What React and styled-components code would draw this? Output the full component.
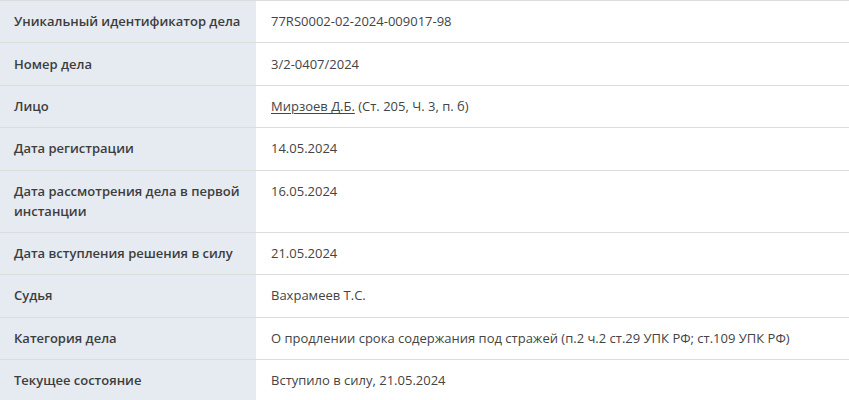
import React from 'react';
import styled, { createGlobalStyle } from 'styled-components';

const GlobalStyle = createGlobalStyle`
  html, body {
    margin: 0;
    padding: 0;
    background: #fff;
  }
  body {
    font-family: "Open Sans", "Liberation Sans", sans-serif;
  }
`;

const Table = styled.div`
  width: 849px;
  display: flex;
  flex-direction: column;
`;

const Row = styled.div`
  display: grid;
  grid-template-columns: 256px 1fr;
  border-top: 1px solid #dcdcdc;
`;

const Label = styled.div`
  background: #e6ebf2;
  color: #3d3d3d;
  font-size: 13px;
  font-weight: 600;
  line-height: 20px;
  padding: 10.2px 12px 11.2px 14px;
`;

const Value = styled.div`
  color: #444;
  font-size: 13px;
  line-height: 20px;
  padding: 10.2px 15px 11.2px;
`;

const PersonLink = styled.a`
  color: #444;
  text-decoration: underline;
  text-underline-offset: 2px;
`;

const rows = [
  { label: 'Уникальный идентификатор дела', value: '77RS0002-02-2024-009017-98' },
  { label: 'Номер дела', value: '3/2-0407/2024' },
  {
    label: 'Лицо',
    value: (
      <>
        <PersonLink href="#">Мирзоев Д.Б.</PersonLink> (Ст. 205, Ч. 3, п. б)
      </>
    ),
  },
  { label: 'Дата регистрации', value: '14.05.2024' },
  { label: 'Дата рассмотрения дела в первой инстанции', value: '16.05.2024' },
  { label: 'Дата вступления решения в силу', value: '21.05.2024' },
  { label: 'Судья', value: 'Вахрамеев Т.С.' },
  {
    label: 'Категория дела',
    value: 'О продлении срока содержания под стражей (п.2 ч.2 ст.29 УПК РФ; ст.109 УПК РФ)',
  },
  { label: 'Текущее состояние', value: 'Вступило в силу, 21.05.2024' },
];

export default function App() {
  return (
    <>
      <GlobalStyle />
      <Table>
        {rows.map((row) => (
          <Row key={row.label}>
            <Label>{row.label}</Label>
            <Value>{row.value}</Value>
          </Row>
        ))}
      </Table>
    </>
  );
}
